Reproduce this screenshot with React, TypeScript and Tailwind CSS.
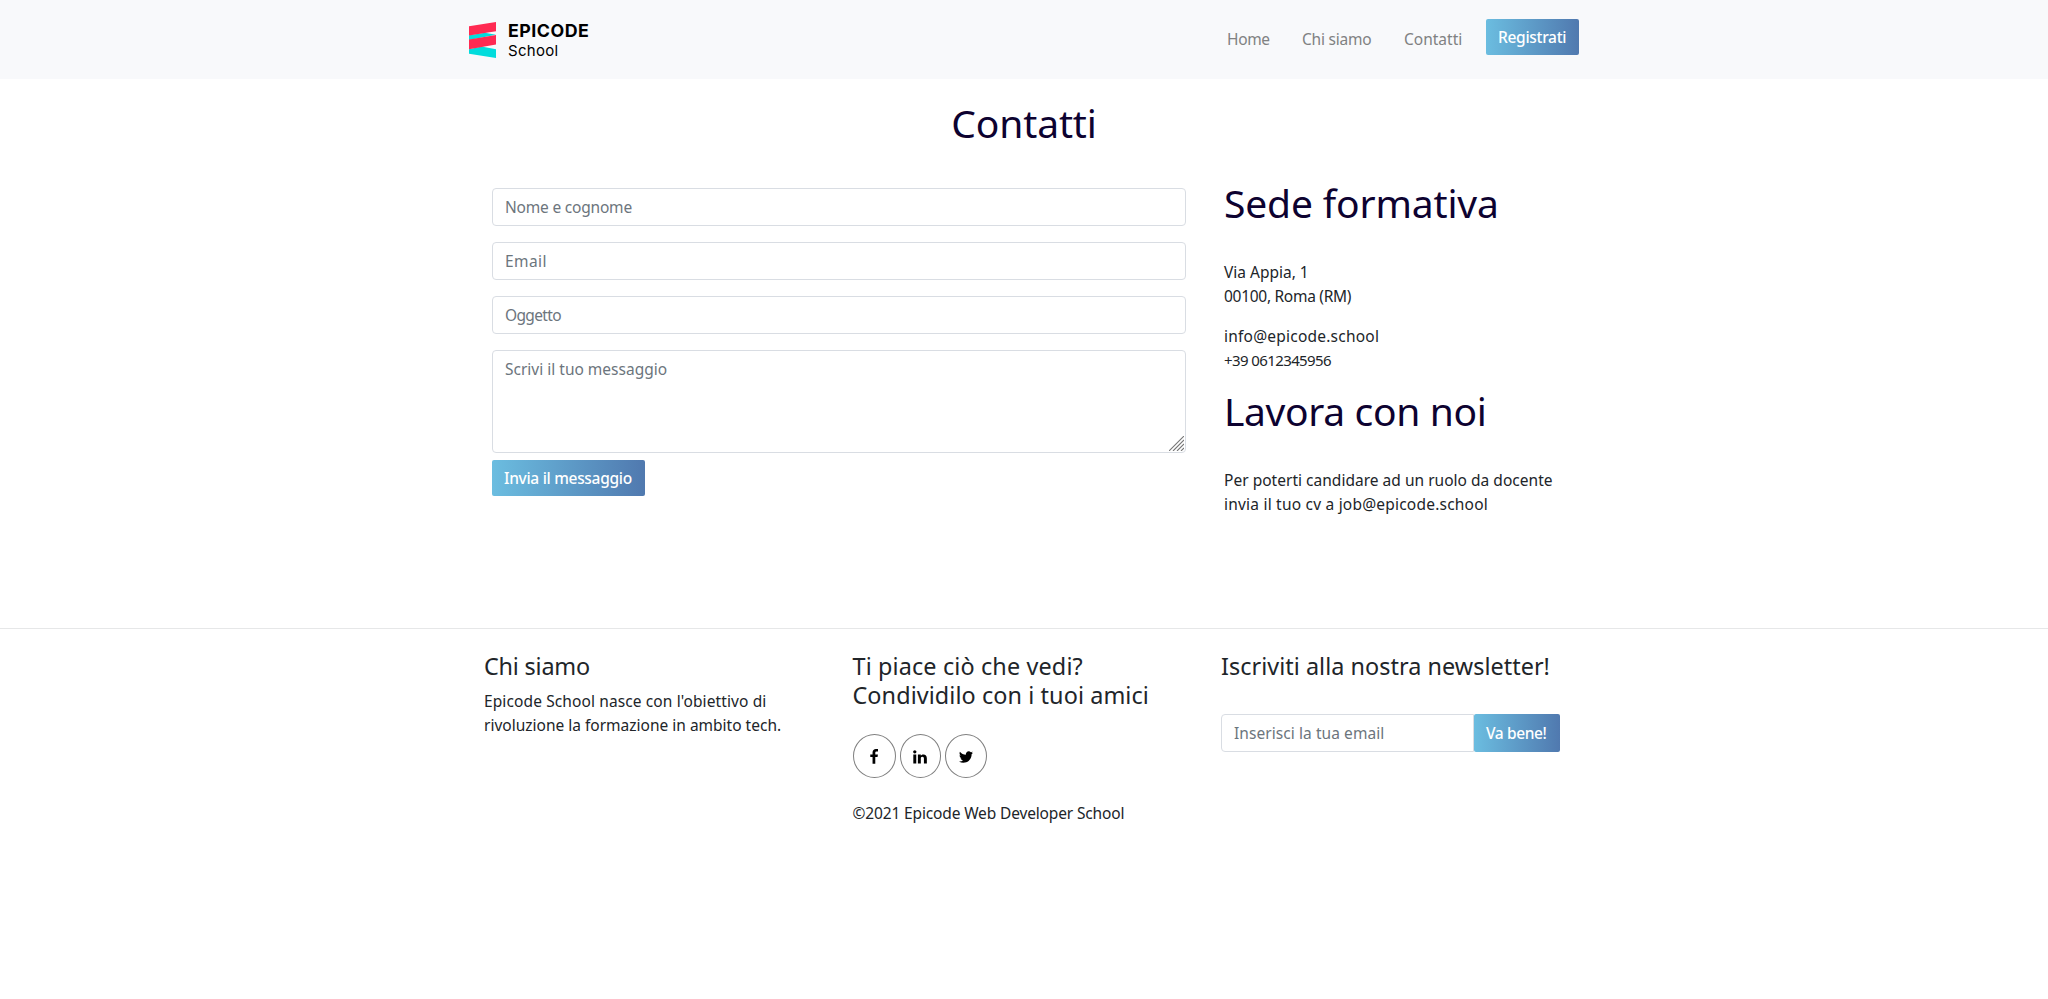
import type { ReactNode } from 'react';

const GRADIENT = 'bg-linear-to-r/srgb from-[#6bbde0] to-[#5079af] text-white font-medium text-[15.5px] leading-6 whitespace-nowrap';
const INPUT =
  'block w-full border border-[#d9dde3] bg-white px-3 py-1.5 text-[15.5px] leading-6 text-[#495057] outline-none placeholder:text-[#6c757d] placeholder:opacity-100';

function Logo() {
  return (
    <a href="#" className="flex h-9 items-start gap-3">
      <svg width="27" height="36" viewBox="0 0 27 36" aria-hidden="true">
        <path d="M0 13.3 16 10.8 27 12.8 0 18Z" fill="#02dcdc" />
        <path d="M0 27.2 12.5 24.6 27 27.2V36L0 31.8Z" fill="#02dcdc" />
        <path d="M0 4.3 27 0V9.3L0 13.5Z" fill="#ff2a52" />
        <path d="M0 17.6 27 13V22.4L0 27.3Z" fill="#ff2a52" />
      </svg>
      <span className="flex flex-col font-['Inter',sans-serif] text-black">
        <span className="h-5 text-[17.8px] font-bold leading-[17px] tracking-[0.5px]">EPICODE</span>
        <span className="text-[15px] leading-[17px] tracking-[0.3px]">School</span>
      </span>
    </a>
  );
}

function Heading({ children, className }: { children: ReactNode; className: string }) {
  return <h2 className={`text-[39px] leading-[48px] text-[#0d0230] whitespace-nowrap ${className}`}>{children}</h2>;
}

function Social({ path, className, label }: { path: string; className: string; label: string }) {
  return (
    <a
      href="#"
      aria-label={label}
      className={`flex h-11 items-center justify-center rounded-[50%] border border-[#808080] pt-[2px] text-black ${className}`}
    >
      <svg width="16" height="16" viewBox="0 0 1792 1792" fill="currentColor" aria-hidden="true">
        <path d={path} />
      </svg>
    </a>
  );
}

const FACEBOOK =
  'M1343 12v264h-157q-86 0-116 36t-30 108v189h293l-39 296h-254v759h-306v-759h-255v-296h255v-218q0-186 104-288.5t277-102.5q147 0 228 12z';
const LINKEDIN =
  'M477 625v991h-330v-991h330zm21-306q1 73-50.5 122t-135.5 49h-2q-82 0-132-49t-50-122q0-74 51.5-122.5t134.5-48.5 133 48.5 51 122.5zm1166 729v568h-329v-530q0-105-40.5-164.5t-126.5-59.5q-63 0-105.5 34.5t-63.5 85.5q-11 30-11 81v553h-329q2-399 2-647t-1-296l-1-48h329v144h-2q20-32 41-56t56.5-52 87-43.5 114.5-15.5q171 0 275 113.5t104 332.5z';
const TWITTER =
  'M1684 408q-67 98-162 167 1 14 1 42 0 130-38 259.5t-115.5 248.5-184.5 210.5-258 146-323 54.5q-271 0-496-145 35 4 78 4 225 0 401-138-105-2-188-64.5t-114-159.5q33 5 61 5 43 0 85-11-112-23-185.5-111.5t-73.5-205.5v-4q68 38 146 41-66-44-105-115t-39-154q0-88 44-163 121 149 294.5 238.5t371.5 99.5q-8-38-8-74 0-134 94.5-228.5t228.5-94.5q140 0 236 102 109-21 205-78-37 115-142 178 93-10 186-50z';

export default function App() {
  return (
    <div className="min-h-[999px] bg-white font-['Noto_Sans',sans-serif] text-[15.5px] leading-6 text-[#212529]">
      <header className="h-[79px] bg-[#f8f9fb]">
        <div className="mx-auto flex w-[1110px] justify-between">
          <div className="pt-[22px]">
            <Logo />
          </div>
          <nav className="flex items-start pt-[19px] text-[#808182] whitespace-nowrap">
            <a href="#" className="mt-2 w-[75px] tracking-[-0.35px]">Home</a>
            <a href="#" className="mt-2 w-[102px] tracking-[-0.21px]">Chi siamo</a>
            <a href="#" className="mt-2 w-[82px]">Contatti</a>
            <a href="#" className={`w-[93px] rounded-[2px] py-1.5 pl-3 tracking-[-0.3px] ${GRADIENT}`}>Registrati</a>
          </nav>
        </div>
      </header>

      <main className="mx-auto h-[549px] w-[1110px] pt-5">
        <Heading className="text-center tracking-[-0.15px]">Contatti</Heading>
        <div className="flex pt-8">
          <form className="ml-[23px] mt-[9px] flex w-[694px] flex-col items-start">
            <input placeholder="Nome e cognome" className={`mb-4 h-[38px] rounded tracking-[-0.2px] ${INPUT}`} />
            <input placeholder="Email" className={`mb-4 h-[38px] rounded tracking-[0.42px] ${INPUT}`} />
            <input placeholder="Oggetto" className={`mb-4 h-[38px] rounded tracking-[-0.65px] ${INPUT}`} />
            <div className="relative mb-[7px] w-full">
              <textarea placeholder="Scrivi il tuo messaggio" className={`h-[103px] resize-none rounded ${INPUT}`} />
              <svg
                className="absolute right-[2px] bottom-[2px]"
                width="15"
                height="15"
                viewBox="0 0 15 15"
                stroke="#777"
                strokeWidth="1.1"
                aria-hidden="true"
              >
                <path d="M0 15 15 0M4 15 15 4M8 15 15 8M12 15 15 12" />
              </svg>
            </div>
            <button type="button" className={`h-9 w-[153px] rounded-[2px] pl-3 text-left tracking-[-0.3px] ${GRADIENT}`}>
              Invia il messaggio
            </button>
          </form>
          <aside className="ml-[38px] whitespace-nowrap">
            <Heading className="mb-[33px] tracking-[-0.15px]">Sede formativa</Heading>
            <p className="mb-4">
              <span className="block">Via Appia, 1</span>
              <span className="block tracking-[-0.29px]">00100, Roma (RM)</span>
            </p>
            <p className="mb-[15px]">
              <span className="block tracking-[0.22px]">info@epicode.school</span>
              <span className="block text-[15px] tracking-[-0.6px]">+39 0612345956</span>
            </p>
            <Heading className="mb-[33px] tracking-[-0.35px]">Lavora con noi</Heading>
            <p>
              <span className="block tracking-[0.02px]">Per poterti candidare ad un ruolo da docente</span>
              <span className="block tracking-[0.21px]">invia il tuo cv a job@epicode.school</span>
            </p>
          </aside>
        </div>
      </main>

      <footer className="border-t border-[#e6e7e8]">
        <div className="mx-auto flex w-[1080px] pt-[23px] whitespace-nowrap">
          <section className="w-[368.5px]">
            <h4 className="mb-2 text-[23.4px] leading-[29px] tracking-[-0.2px]">Chi siamo</h4>
            <p>
              <span className="block tracking-[0.11px]">Epicode School nasce con l'obiettivo di</span>
              <span className="block">rivoluzione la formazione in ambito tech.</span>
            </p>
          </section>
          <section className="w-[368.5px]">
            <h4 className="text-[23.4px] leading-[29px]">
              <span className="block tracking-[0.14px]">Ti piace ciò che vedi?</span>
              <span className="block tracking-[0.09px]">Condividilo con i tuoi amici</span>
            </h4>
            <div className="mb-[23px] mt-6 flex gap-1">
              <Social label="Facebook" path={FACEBOOK} className="w-[43px]" />
              <Social label="LinkedIn" path={LINKEDIN} className="w-[41.5px]" />
              <Social label="Twitter" path={TWITTER} className="w-[42px]" />
            </div>
            <p className="tracking-[-0.145px]">©2021 Epicode Web Developer School</p>
          </section>
          <section>
            <h4 className="mb-[33px] text-[23.4px] leading-[29px] tracking-[0.04px]">Iscriviti alla nostra newsletter!</h4>
            <div className="flex">
              <div className="w-[253px]">
                <input placeholder="Inserisci la tua email" className={`h-[38px] rounded-l tracking-[0.07px] ${INPUT}`} />
              </div>
              <button type="button" className={`h-[38px] w-[86px] rounded-[2px] pl-3 text-left tracking-[-0.4px] ${GRADIENT}`}>
                Va bene!
              </button>
            </div>
          </section>
        </div>
      </footer>
    </div>
  );
}
